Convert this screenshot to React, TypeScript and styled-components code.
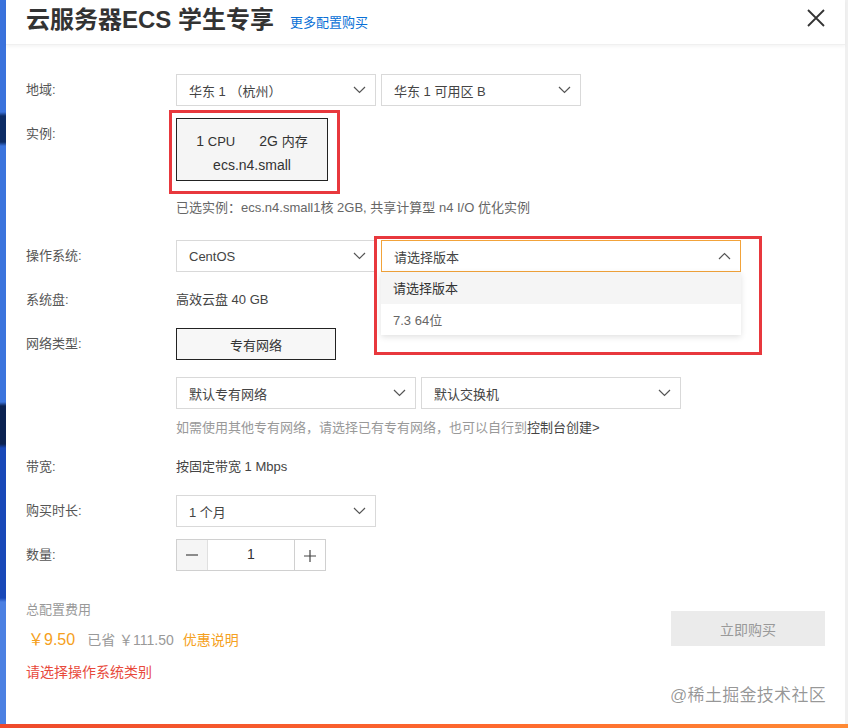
import React from 'react';
import styled, { createGlobalStyle } from 'styled-components';

const GlobalStyle = createGlobalStyle`
  html, body {
    margin: 0;
    padding: 0;
    background: #fff;
  }
  body {
    font-family: "Liberation Sans", "Noto Sans CJK SC", sans-serif;
    color: #333;
  }
  * { box-sizing: border-box; }
`;

const Page = styled.div`
  width: 848px;
  height: 728px;
  display: flex;
  flex-direction: column;
  overflow: hidden;
`;

const Main = styled.div`
  flex: 1;
  display: flex;
  min-height: 0;
`;

const SideStrip = styled.div`
  width: 6px;
  background: linear-gradient(
    180deg,
    #3a72dc 0px, #3a72dc 112px,
    #0d2c66 116px, #0d2c66 142px,
    #3b74dd 146px, #3b74dd 402px,
    #0b2252 406px, #0b2252 444px,
    #1848b8 448px, #1848b8 598px,
    #4c80e2 602px, #4c80e2 100%
  );
`;

const ScrollStrip = styled.div`
  width: 3px;
  background: #f0f0f0;
`;

const BottomBar = styled.div`
  height: 4px;
  background: linear-gradient(90deg, #ee4a2c, #ff6a2e 60%, #ff8a35);
`;

const Dialog = styled.div`
  flex: 1;
  display: flex;
  flex-direction: column;
  position: relative;
`;

const Header = styled.div`
  height: 45px;
  display: flex;
  align-items: center;
  padding: 0 19px 0 20px;
  box-shadow: 0 2px 3px rgba(0, 0, 0, 0.04);
  border-bottom: 1px solid #f0f0f0;
`;

const Title = styled.h1`
  margin: 0;
  font-size: 24px;
  font-weight: bold;
  color: #333;
  line-height: 32px;
  margin-top: -5px;
`;

const MoreLink = styled.a`
  margin-left: 16px;
  margin-top: -2px;
  font-size: 13px;
  color: #0a70d6;
  text-decoration: none;
`;

const CloseButton = styled.button`
  margin-left: auto;
  margin-top: -8px;
  border: none;
  background: none;
  padding: 0;
  width: 20px;
  height: 20px;
  display: flex;
  align-items: center;
  justify-content: center;
`;

const Body = styled.div`
  padding: 29px 20px 0 20px;
  display: flex;
  flex-direction: column;
  flex: 1;
`;

const Row = styled.div<{ $mt?: number }>`
  display: grid;
  grid-template-columns: 150px 1fr;
  margin-top: ${p => p.$mt ?? 0}px;
  align-items: start;
`;

const Label = styled.div`
  font-size: 13px;
  line-height: 32px;
  color: #555;
`;

const Field = styled.div<{ $gap?: number }>`
  display: flex;
  gap: ${p => p.$gap ?? 5}px;
  align-items: flex-start;
`;

const SelectBox = styled.div<{ $w: number; $active?: boolean }>`
  position: relative;
  width: ${p => p.$w}px;
  height: 32px;
  border: 1px solid ${p => (p.$active ? '#f2a33a' : '#d9d9d9')};
  display: flex;
  align-items: center;
  justify-content: space-between;
  padding: 0 9px 0 12px;
  font-size: 13px;
  color: #444;
  background: #fff;
`;

const Menu = styled.div`
  position: absolute;
  left: -1px;
  right: -1px;
  top: 31px;
  background: #fff;
  box-shadow: 0 2px 6px rgba(0, 0, 0, 0.12);
  z-index: 2;
`;

const MenuItem = styled.div<{ $selected?: boolean }>`
  height: 31.5px;
  display: flex;
  align-items: center;
  padding-left: 12px;
  font-size: 13px;
  background: ${p => (p.$selected ? '#f5f5f5' : '#fff')};
  color: ${p => (p.$selected ? '#333' : '#666')};
`;

const Annotation = styled.div<{ $l: number; $t: number; $r: number; $b: number }>`
  position: absolute;
  left: ${p => p.$l}px;
  top: ${p => p.$t}px;
  right: ${p => p.$r}px;
  bottom: ${p => p.$b}px;
  border: 3px solid #e8383d;
  pointer-events: none;
  z-index: 3;
`;

const InstanceCard = styled.div`
  position: relative;
  width: 152px;
  height: 63px;
  border: 1px solid #222;
  background: #f5f5f5;
  display: flex;
  flex-direction: column;
  align-items: center;
  justify-content: center;
  gap: 5px;
  padding-top: 6px;
  font-size: 14px;
  color: #333;
  line-height: 18px;
`;

const SpecLine = styled.div`
  display: flex;
  gap: 24px;
`;

const Small = styled.span`
  font-size: 13px;
`;

const Text = styled.div<{ $color?: string; $size?: number }>`
  font-size: ${p => p.$size ?? 13}px;
  color: ${p => p.$color ?? '#444'};
  line-height: 32px;
`;

const Note = styled.div`
  font-size: 13px;
  line-height: 20px;
  color: #666;
`;

const Hint = styled.div`
  font-size: 13px;
  line-height: 20px;
  color: #999;
`;

const HintLink = styled.span`
  color: #444;
`;

const ToggleButton = styled.div`
  width: 160px;
  height: 32px;
  border: 1px solid #222;
  background: #f7f7f7;
  display: flex;
  align-items: center;
  justify-content: center;
  font-size: 13px;
  color: #333;
`;

const Stepper = styled.div`
  width: 150px;
  height: 32px;
  border: 1px solid #d0d0d0;
  display: flex;
`;

const StepButton = styled.div<{ $shade?: boolean }>`
  width: 30px;
  display: flex;
  align-items: center;
  justify-content: center;
  background: ${p => (p.$shade ? '#f5f5f5' : '#fff')};
`;

const StepValue = styled.div`
  flex: 1;
  border-left: 1px solid #e0e0e0;
  border-right: 1px solid #d0d0d0;
  display: flex;
  align-items: center;
  justify-content: center;
  font-size: 14px;
  color: #333;
  padding-bottom: 3px;
`;

const Footer = styled.div`
  margin-top: 29px;
  display: flex;
  justify-content: space-between;
  align-items: flex-start;
`;

const Cost = styled.div`
  display: flex;
  flex-direction: column;
`;

const CostTitle = styled.div`
  font-size: 13px;
  line-height: 20px;
  color: #999;
`;

const PriceLine = styled.div`
  margin-top: 10px;
  display: flex;
  align-items: baseline;
  line-height: 20px;
`;

const Price = styled.span`
  font-size: 16px;
  color: #f5a020;
  margin-right: 12px;
  margin-left: 2px;
`;

const Saved = styled.span`
  font-size: 14px;
  color: #999;
  margin-right: 9px;
`;

const Discount = styled.span`
  font-size: 14px;
  color: #f5a020;
`;

const ErrorText = styled.div`
  margin-top: 12px;
  font-size: 14px;
  line-height: 20px;
  color: #e84a3c;
`;

const BuyButton = styled.button`
  margin-top: 11px;
  width: 154px;
  height: 35px;
  border: none;
  background: #ebebeb;
  color: #999;
  font-size: 14px;
  font-family: inherit;
`;

const Watermark = styled.div`
  position: absolute;
  right: 19px;
  bottom: 18px;
  font-size: 17px;
  color: rgba(0, 0, 0, 0.42);
  letter-spacing: 0.3px;
`;

const Chevron = ({ up }: { up?: boolean }) => (
  <svg width="13" height="8" viewBox="0 0 13 8">
    <polyline
      points={up ? '1,7 6.5,1.5 12,7' : '1,1 6.5,6.5 12,1'}
      fill="none"
      stroke="#555"
      strokeWidth="1.2"
    />
  </svg>
);

const Select = ({ w, value, active, up, children }: {
  w: number; value: string; active?: boolean; up?: boolean; children?: React.ReactNode;
}) => (
  <SelectBox $w={w} $active={active}>
    <span>{value}</span>
    <Chevron up={up} />
    {children}
  </SelectBox>
);

export default function App() {
  return (
    <Page>
      <GlobalStyle />
      <Main>
        <SideStrip />
        <Dialog>
          <Header>
            <Title>云服务器ECS 学生专享</Title>
            <MoreLink href="#">更多配置购买</MoreLink>
            <CloseButton aria-label="close">
              <svg width="18" height="18" viewBox="0 0 18 18">
                <path d="M1 1 L17 17 M17 1 L1 17" stroke="#333" strokeWidth="1.8" />
              </svg>
            </CloseButton>
          </Header>
          <Body>
            <Row>
              <Label>地域:</Label>
              <Field>
                <Select w={200} value="华东 1 （杭州）" />
                <Select w={200} value="华东 1 可用区 B" />
              </Field>
            </Row>
            <Row $mt={12}>
              <Label>实例:</Label>
              <Field>
                <InstanceCard>
                  <SpecLine>
                    <span>1 <Small>CPU</Small></span>
                    <span>2G <Small>内存</Small></span>
                  </SpecLine>
                  <div>ecs.n4.small</div>
                  <Annotation $l={-8} $t={-9} $r={-13} $b={-14} />
                </InstanceCard>
              </Field>
            </Row>
            <Row $mt={17}>
              <div />
              <Note>已选实例：ecs.n4.small1核 2GB, 共享计算型 n4 I/O 优化实例</Note>
            </Row>
            <Row $mt={22}>
              <Label>操作系统:</Label>
              <Field>
                <Select w={200} value="CentOS" />
                <Select w={360} value="请选择版本" active up>
                  <Menu>
                    <MenuItem $selected>请选择版本</MenuItem>
                    <MenuItem>7.3 64位</MenuItem>
                  </Menu>
                  <Annotation $l={-8} $t={-5} $r={-22} $b={-84} />
                </Select>
              </Field>
            </Row>
            <Row $mt={12}>
              <Label>系统盘:</Label>
              <Text>高效云盘 40 GB</Text>
            </Row>
            <Row $mt={12}>
              <Label>网络类型:</Label>
              <Field>
                <ToggleButton>专有网络</ToggleButton>
              </Field>
            </Row>
            <Row $mt={17}>
              <div />
              <Field>
                <Select w={240} value="默认专有网络" />
                <Select w={260} value="默认交换机" />
              </Field>
            </Row>
            <Row $mt={9}>
              <div />
              <Hint>
                如需使用其他专有网络，请选择已有专有网络，也可以自行到<HintLink>控制台创建&gt;</HintLink>
              </Hint>
            </Row>
            <Row $mt={13}>
              <Label>带宽:</Label>
              <Text>按固定带宽 1 Mbps</Text>
            </Row>
            <Row $mt={12}>
              <Label>购买时长:</Label>
              <Field>
                <Select w={200} value="1 个月" />
              </Field>
            </Row>
            <Row $mt={12}>
              <Label>数量:</Label>
              <Field>
                <Stepper>
                  <StepButton $shade>
                    <svg width="14" height="14" viewBox="0 0 14 14">
                      <path d="M1 7 H13" stroke="#444" strokeWidth="1.2" />
                    </svg>
                  </StepButton>
                  <StepValue>1</StepValue>
                  <StepButton>
                    <svg width="14" height="14" viewBox="0 0 14 14">
                      <path d="M1 8 H13 M7 2 V14" stroke="#444" strokeWidth="1.2" />
                    </svg>
                  </StepButton>
                </Stepper>
              </Field>
            </Row>
            <Footer>
              <Cost>
                <CostTitle>总配置费用</CostTitle>
                <PriceLine>
                  <Price>￥9.50</Price>
                  <Saved>已省 ￥111.50</Saved>
                  <Discount>优惠说明</Discount>
                </PriceLine>
                <ErrorText>请选择操作系统类别</ErrorText>
              </Cost>
              <BuyButton>立即购买</BuyButton>
            </Footer>
          </Body>
          <Watermark>@稀土掘金技术社区</Watermark>
        </Dialog>
        <ScrollStrip />
      </Main>
      <BottomBar />
    </Page>
  );
}
